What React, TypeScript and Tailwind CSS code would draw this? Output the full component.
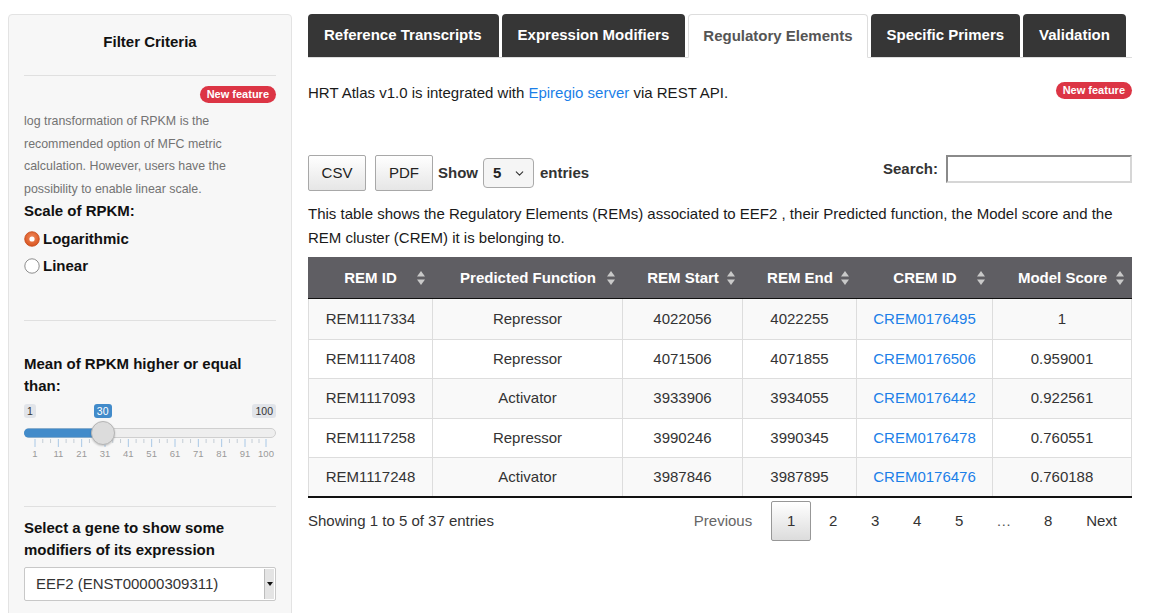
import React from "react";
import { ChevronDown } from "lucide-react";

const rows = [
  ["REM1117334", "Repressor", "4022056", "4022255", "CREM0176495", "1"],
  ["REM1117408", "Repressor", "4071506", "4071855", "CREM0176506", "0.959001"],
  ["REM1117093", "Activator", "3933906", "3934055", "CREM0176442", "0.922561"],
  ["REM1117258", "Repressor", "3990246", "3990345", "CREM0176478", "0.760551"],
  ["REM1117248", "Activator", "3987846", "3987895", "CREM0176476", "0.760188"],
];

const rowHeights = ["h-[40px]", "h-[39px]", "h-[40px]", "h-[39px]", "h-[39px]"];

const headers = ["REM ID", "Predicted Function", "REM Start", "REM End", "CREM ID", "Model Score"];
const tabs = ["Reference Transcripts", "Expression Modifiers", "Regulatory Elements", "Specific Primers", "Validation"];

function SortIcon() {
  return (
    <svg width="8" height="14" viewBox="0 0 8 14" className="absolute right-[8px] top-1/2 -translate-y-1/2">
      <polygon points="4,0 8,5.5 0,5.5" fill="#c9c9c9" />
      <polygon points="0,8.5 8,8.5 4,14" fill="#c9c9c9" />
    </svg>
  );
}

function Badge() {
  return (
    <span className="inline-flex items-center h-[17px] px-[7px] rounded-full bg-[#dc3545] text-white text-[11px] font-bold leading-none">
      New feature
    </span>
  );
}

function Radio({ checked }: { checked: boolean }) {
  return (
    <svg width="16" height="16" viewBox="0 0 16 16" className="shrink-0">
      {checked ? (
        <>
          <defs>
            <radialGradient id="rg" cx="50%" cy="40%" r="60%">
              <stop offset="0%" stopColor="#f08a5d" />
              <stop offset="100%" stopColor="#d9531e" />
            </radialGradient>
          </defs>
          <circle cx="8" cy="8" r="7.3" fill="url(#rg)" stroke="#c44a1a" strokeWidth="0.8" />
          <circle cx="8" cy="8" r="2.6" fill="#ffffff" />
        </>
      ) : (
        <circle cx="8" cy="8" r="7.2" fill="#ffffff" stroke="#8d8d8d" strokeWidth="1" />
      )}
    </svg>
  );
}

function Slider() {
  const x0 = 11;
  const span = 231;
  const pos = (v: number) => x0 + ((v - 1) / 99) * span;
  const majors = [1, 11, 21, 31, 41, 51, 61, 71, 81, 91, 100];
  const minors: number[] = [];
  for (let i = 0; i < majors.length - 1; i++) {
    const a = majors[i];
    const b = majors[i + 1];
    minors.push(a + (b - a) / 3, a + (2 * (b - a)) / 3);
  }
  const h = pos(30);
  return (
    <div className="relative h-[62px] w-[252px]">
      <span className="absolute left-0 top-[3px] h-[14px] px-[3px] rounded-[3px] bg-[#e1e4e9] text-[#333] text-[10.5px] leading-[14px]">1</span>
      <span className="absolute right-0 top-[3px] h-[14px] px-[3px] rounded-[3px] bg-[#e1e4e9] text-[#333] text-[10.5px] leading-[14px]">100</span>
      <span
        className="absolute top-[3px] h-[14px] w-[18px] rounded-[3px] bg-[#428bca] text-white text-[10.5px] leading-[14px] text-center"
        style={{ left: h - 9 }}
      >
        30
      </span>
      <svg width="252" height="20" className="absolute left-0 top-[27px]">
        <rect x="0.5" y="0.5" width="251" height="9" rx="4.5" fill="#eeeeee" stroke="#cfcfcf" />
        <rect x="0" y="0.5" width={h} height="9" rx="4.5" fill="#428bca" />
        {majors.map((v) => (
          <line key={"M" + v} x1={pos(v)} x2={pos(v)} y1="11" y2="19" stroke="#a9c8e6" strokeWidth="1" />
        ))}
        {minors.map((v, i) => (
          <line key={"m" + i} x1={pos(v)} x2={pos(v)} y1="11" y2="15" stroke="#c4cdd6" strokeWidth="1" />
        ))}
      </svg>
      <div
        className="absolute top-[20px] h-[24px] w-[24px] rounded-full bg-[#dcdcdc] border border-[#b5b5b5] shadow-[0_1px_2px_rgba(0,0,0,0.2)]"
        style={{ left: h - 12 }}
      />
      {majors.map((v) => (
        <span
          key={"t" + v}
          className="absolute top-[47px] text-[9.5px] leading-[12px] text-[#9a9a9a] -translate-x-1/2"
          style={{ left: pos(v) }}
        >
          {v}
        </span>
      ))}
    </div>
  );
}

export default function App() {
  return (
    <div className="font-['Liberation_Sans',Arial,sans-serif] bg-white min-h-[613px] flex items-start pl-[8px] pt-[14px] gap-[16px] text-[#222]">
      {/* Sidebar */}
      <div className="w-[284px] shrink-0 border border-[#e3e3e3] rounded-[4px] bg-[#f7f7f7] px-[15px] pt-[17px] pb-[20px]">
        <div className="text-center font-bold text-[15px] leading-[20px] text-[#111]">Filter Criteria</div>
        <div className="mt-[23px] border-t border-[#e0e0e0]" />
        <div className="mt-[10px] flex justify-end">
          <Badge />
        </div>
        <p className="mt-[7px] text-[12.4px] leading-[22.6px] text-[#737373]">
          log transformation of RPKM is the recommended option of MFC metric calculation. However, users have the possibility to enable linear scale.
        </p>
        <div className="font-bold text-[15px] leading-[22px] text-[#111]">Scale of RPKM:</div>
        <div className="mt-[3px]">
          <div className="flex items-center h-[27px] gap-[3px]">
            <Radio checked={true} />
            <span className="font-bold text-[15px] text-[#111]">Logarithmic</span>
          </div>
          <div className="flex items-center h-[27px] gap-[3px]">
            <Radio checked={false} />
            <span className="font-bold text-[15px] text-[#111]">Linear</span>
          </div>
        </div>
        <div className="mt-[41px] border-t border-[#e0e0e0]" />
        <div className="mt-[32px] font-bold text-[15px] leading-[22px] text-[#111]">Mean of RPKM higher or equal than:</div>
        <div className="mt-[4px]">
          <Slider />
        </div>
        <div className="mt-[43px] border-t border-[#e0e0e0]" />
        <div className="mt-[10px] font-bold text-[15px] leading-[22px] text-[#111]">Select a gene to show some modifiers of its expression</div>
        <div className="mt-[6px] h-[34px] flex items-stretch bg-white border border-[#c8c8c8] rounded-[2px]">
          <div className="flex-1 flex items-center pl-[11px] text-[15px] text-[#333]">EEF2 (ENST00000309311)</div>
          <div className="w-[10px] my-[1px] mr-[1px] bg-[#e4e4e4] border-l border-[#bdbdbd] flex items-center justify-center">
            <svg width="6" height="4" viewBox="0 0 6 4">
              <polygon points="0,0 6,0 3,4" fill="#111" />
            </svg>
          </div>
        </div>
      </div>

      {/* Main */}
      <div className="w-[824px] shrink-0">
        <div className="flex h-[44px] border-b border-[#dddddd]">
          {tabs.map((t, i) =>
            i === 2 ? (
              <div
                key={t}
                className="h-[44px] -mb-px mr-[3px] px-[14px] flex items-center bg-white border border-[#dddddd] border-b-white rounded-t-[4px] text-[15px] font-bold text-[#555]"
              >
                {t}
              </div>
            ) : (
              <div
                key={t}
                className={
                  "h-[43px] mr-[3px] flex items-center bg-[#363636] rounded-t-[4px] text-[15px] font-bold text-white " +
                  (i === 0 ? "pl-[16px] pr-[17px]" : "px-[16px]")
                }
              >
                {t}
              </div>
            )
          )}
        </div>

        <div className="mt-[24px] flex justify-between items-start">
          <div className="text-[15px] leading-[21px] text-[#1a1a1a]">
            HRT Atlas v1.0 is integrated with <span className="text-[#1b7fe8]">Epiregio server</span> via REST API.
          </div>
          <Badge />
        </div>

        <div className="mt-[52px] flex items-start justify-between">
          <div className="flex items-center">
            <div className="h-[36px] w-[58px] flex items-center justify-center border border-[#a8a8a8] rounded-[2px] bg-linear-to-b from-[#ffffff] to-[#e6e6e6] text-[15px] text-[#222]">CSV</div>
            <div className="ml-[9px] h-[36px] w-[58px] flex items-center justify-center border border-[#a8a8a8] rounded-[2px] bg-linear-to-b from-[#ffffff] to-[#e6e6e6] text-[15px] text-[#222]">PDF</div>
            <span className="ml-[5px] font-bold text-[15px] text-[#333]">Show</span>
            <div className="ml-[5px] h-[30px] w-[51px] flex items-center justify-between pl-[9px] pr-[7px] border border-[#aaaaaa] rounded-[4px] bg-[#f5f5f5] font-bold text-[15px] text-[#222]">
              <span>5</span>
              <ChevronDown size={13} strokeWidth={2} color="#333" />
            </div>
            <span className="ml-[6px] font-bold text-[15px] text-[#333]">entries</span>
          </div>
          <div className="flex items-center">
            <span className="font-bold text-[15px] text-[#333]">Search:</span>
            <div className="ml-[8px] h-[28px] w-[186px] bg-white border-2 border-[#d6d6d6] border-t-[#8a8a8a] border-l-[#8a8a8a]" />
          </div>
        </div>

        <p className="mt-[11px] text-[15px] leading-[24px] text-[#1a1a1a]">
          This table shows the Regulatory Elements (REMs) associated to EEF2 , their Predicted function, the Model score and the REM cluster (CREM) it is belonging to.
        </p>

        <div className="mt-[7px] border-b-2 border-[#111]">
          <div className="grid grid-cols-[125px_190px_120px_114px_136px_139px] h-[42px] bg-[#5f5e63] border-b border-[#111]">
            {headers.map((hd) => (
              <div key={hd} className="relative flex items-center justify-center pt-px text-[15px] font-bold text-white">
                {hd}
                <SortIcon />
              </div>
            ))}
          </div>
          {rows.map((r, ri) => (
            <div
              key={r[0]}
              className={
                "grid grid-cols-[125px_190px_120px_114px_136px_139px] " +
                rowHeights[ri] +
                " " +
                (ri === 0 ? "" : "border-t border-[#dddddd] ") +
                (ri % 2 === 0 ? "bg-[#f9f9f9]" : "bg-white")
              }
            >
              {r.map((c, ci) => (
                <div
                  key={ci}
                  className={
                    "flex items-center justify-center text-[15px] border-r border-[#dddddd] " +
                    (ci === 0 ? "border-l " : "") +
                    (ci === 4 ? "text-[#1b7fe8]" : "text-[#333]")
                  }
                >
                  {c}
                </div>
              ))}
            </div>
          ))}
        </div>

        <div className="mt-[3px] flex items-center justify-between">
          <span className="text-[15px] text-[#333]">Showing 1 to 5 of 37 entries</span>
          <div className="flex items-center text-[15px]">
            <span className="h-[40px] px-[16px] flex items-center text-[#666] border border-transparent">Previous</span>
            <span className="ml-[2px] h-[40px] w-[40px] justify-center flex items-center text-[#333] border border-[#979797] rounded-[2px] bg-linear-to-b from-[#ffffff] to-[#dcdcdc]">1</span>
            {["2", "3", "4", "5"].map((n) => (
              <span key={n} className="ml-[2px] h-[40px] w-[40px] justify-center flex items-center text-[#333] border border-transparent">{n}</span>
            ))}
            <span className="ml-[2px] w-[45px] text-center text-[#555]">…</span>
            <span className="ml-[2px] h-[40px] w-[40px] justify-center flex items-center text-[#333] border border-transparent">8</span>
            <span className="ml-[2px] h-[40px] pl-[15px] pr-[14px] flex items-center text-[#333] border border-transparent">Next</span>
          </div>
        </div>
      </div>
    </div>
  );
}
